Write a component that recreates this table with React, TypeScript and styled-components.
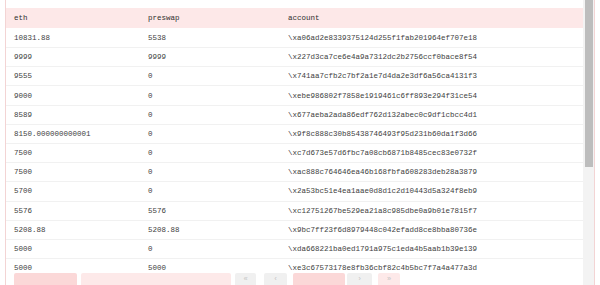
import React from "react";
import styled, { createGlobalStyle } from "styled-components";

const Global = createGlobalStyle`
  html, body { margin: 0; padding: 0; background: #fff; overflow: hidden; }
  body { font-family: "Liberation Mono", monospace; }
`;

const Page = styled.div`
  padding: 0 5px;
  width: 600px;
  box-sizing: border-box;
`;

const Frame = styled.div`
  position: relative;
  display: flex;
  border-left: 1px solid #f3d4d4;
  border-right: 1px solid #f3d4d4;
  height: 285px;
`;

const Scroller = styled.div`
  flex: 1;
  min-width: 0;
  height: 285px;
  overflow: hidden;
`;

const ScrollTrack = styled.div`
  width: 11px;
  flex: none;
  background: #f3f3f3;
  padding: 0 1px 0 2px;
  box-sizing: border-box;
`;

const ScrollThumb = styled.div`
  height: 167px;
  background: #bdbdbd;
`;

const Content = styled.div`
  padding: 8px 0 16px;
`;

const Table = styled.table`
  width: 100%;
  border-collapse: collapse;
  table-layout: fixed;
  font-family: "Liberation Mono", monospace;
  font-size: 7.5px;
`;

const HeadRow = styled.tr`
  background: #fde8e8;
  height: 20.4px;
`;

const Th = styled.th<{ $w?: number }>`
  text-align: left;
  font-weight: normal;
  color: #2f2f2f;
  padding: 0 0 0 8px;
  ${(p) => (p.$w ? `width: ${p.$w}px;` : "")}
`;

const Row = styled.tr`
  height: 19.2px;
  border-bottom: 1px solid #f1f1f1;
`;

const Td = styled.td`
  padding: 0 0 0 8px;
  color: #3e3e3e;
  white-space: nowrap;
  overflow: hidden;
`;

const Footer = styled.div`
  position: absolute;
  left: 0;
  right: 11px;
  top: 271px;
  bottom: 0;
  padding: 2px 0 0 8px;
  display: flex;
  gap: 4px;
  background: #fff;
`;

const Chip = styled.div<{ $w: number; $tone: "pink" | "light" | "gray"; $ml?: number }>`
  width: ${(p) => p.$w}px;
  height: 14px;
  flex: none;
  margin-left: ${(p) => p.$ml ?? 0}px;
  border-radius: 2px;
  background: ${(p) =>
    p.$tone === "pink" ? "#fbd8d8" : p.$tone === "light" ? "#fde9e9" : "#f0f0f0"};
  color: #c4c4c4;
  font-size: 7px;
  line-height: 12px;
  text-align: center;
`;

const rows: [string, string, string][] = [
  ["10831.88", "5538", "\\xa06ad2e8339375124d255f1fab201964ef707e18"],
  ["9999", "9999", "\\x227d3ca7ce6e4a9a7312dc2b2756ccf0bace8f54"],
  ["9555", "0", "\\x741aa7cfb2c7bf2a1e7d4da2e3df6a56ca4131f3"],
  ["9000", "0", "\\xebe986802f7858e1919461c6ff893e294f31ce54"],
  ["8589", "0", "\\x677aeba2ada86edf762d132abec0c9df1cbcc4d1"],
  ["8150.000000000001", "0", "\\x9f8c888c30b85438746493f95d231b60da1f3d66"],
  ["7500", "0", "\\xc7d673e57d6fbc7a08cb6871b8485cec83e0732f"],
  ["7500", "0", "\\xac888c764646ea46b168fbfa608283deb28a3879"],
  ["5700", "0", "\\x2a53bc51e4ea1aae0d8d1c2d10443d5a324f8eb9"],
  ["5576", "5576", "\\xc12751267be529ea21a8c985dbe0a9b01e7815f7"],
  ["5208.88", "5208.88", "\\x9bc7ff23f6d8979448c042efadd8ce8bba80736e"],
  ["5000", "0", "\\xda668221ba0ed1791a975c1eda4b5aab1b39e139"],
  ["5000", "5000", "\\xe3c67573178e8fb36cbf82c4b5bc7f7a4a477a3d"],
];

export default function App() {
  return (
    <>
      <Global />
      <Page>
        <Frame>
          <Scroller>
            <Content>
              <Table>
                <thead>
                  <HeadRow>
                    <Th $w={126}>eth</Th>
                    <Th $w={132}>preswap</Th>
                    <Th>account</Th>
                  </HeadRow>
                </thead>
                <tbody>
                  {rows.map((r, i) => (
                    <Row key={i}>
                      <Td>{r[0]}</Td>
                      <Td>{r[1]}</Td>
                      <Td>{r[2]}</Td>
                    </Row>
                  ))}
                </tbody>
              </Table>
            </Content>
          </Scroller>
          <ScrollTrack>
            <ScrollThumb />
          </ScrollTrack>
          <Footer>
            <Chip $w={63} $tone="pink" />
            <Chip $w={150} $tone="light" />
            <Chip $w={21} $tone="gray">«</Chip>
            <Chip $w={23} $tone="gray" $ml={4}>‹</Chip>
            <Chip $w={52} $tone="pink" $ml={2} />
            <Chip $w={25} $tone="gray" $ml={-2}>›</Chip>
            <Chip $w={22} $tone="light" $ml={2}>»</Chip>
          </Footer>
        </Frame>
      </Page>
    </>
  );
}
